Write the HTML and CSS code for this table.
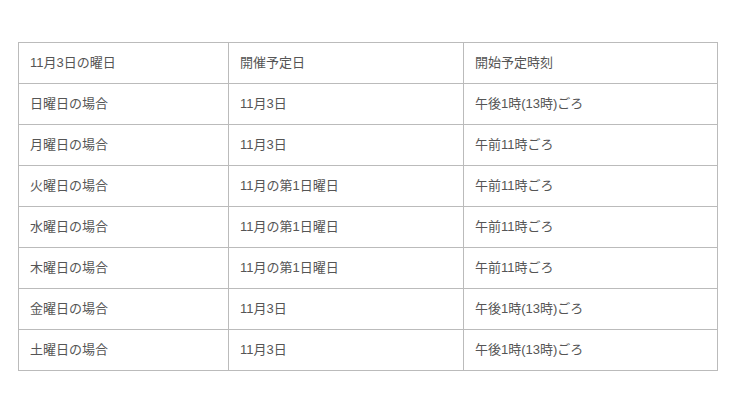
FILE: index.html
```html
<!DOCTYPE html>
<html lang="ja">
<head>
<meta charset="utf-8">
<link rel="stylesheet" href="styles.css">
</head>
<body>
<div class="wrap">
<table class="schedule">
<colgroup><col class="c1"><col class="c2"><col class="c3"></colgroup>
<tr><td>11月3日の曜日</td><td>開催予定日</td><td>開始予定時刻</td></tr>
<tr><td>日曜日の場合</td><td>11月3日</td><td>午後1時(13時)ごろ</td></tr>
<tr><td>月曜日の場合</td><td>11月3日</td><td>午前11時ごろ</td></tr>
<tr><td>火曜日の場合</td><td>11月の第1日曜日</td><td>午前11時ごろ</td></tr>
<tr><td>水曜日の場合</td><td>11月の第1日曜日</td><td>午前11時ごろ</td></tr>
<tr><td>木曜日の場合</td><td>11月の第1日曜日</td><td>午前11時ごろ</td></tr>
<tr><td>金曜日の場合</td><td>11月3日</td><td>午後1時(13時)ごろ</td></tr>
<tr><td>土曜日の場合</td><td>11月3日</td><td>午後1時(13時)ごろ</td></tr>
</table>
</div>
</body>
</html>
```
FILE: styles.css
```css
html, body {
  margin: 0;
  background: #fff;
}
.wrap {
  padding: 42px 0 0 18px;
}
.schedule {
  border-collapse: collapse;
  width: 699px;
  table-layout: fixed;
  font-family: "Liberation Sans", "Noto Sans CJK JP", sans-serif;
  font-size: 13px;
  color: #555;
}
.c1 { width: 210px; }
.c2 { width: 235px; }
.c3 { width: 254px; }
.schedule td {
  border: 1px solid #bbb;
  height: 36px;
  padding: 0 11px 4px;
  vertical-align: middle;
}
```
